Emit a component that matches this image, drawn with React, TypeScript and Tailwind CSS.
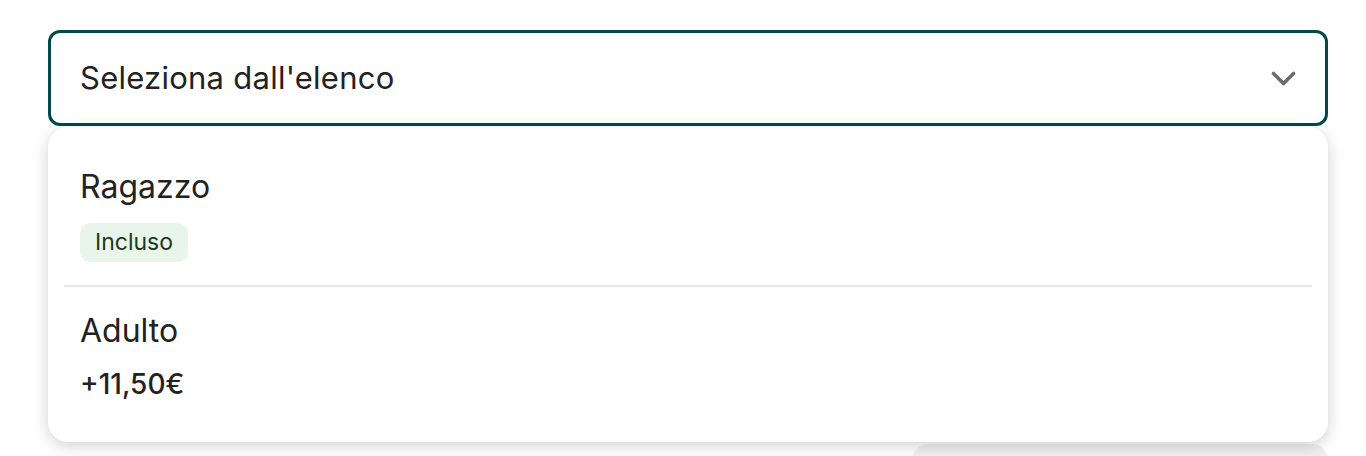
import React from "react";

export default function App() {
  return (
    <div className="relative w-[1366px] h-[456px] bg-white overflow-hidden" style={{ fontFamily: "Inter, 'Noto Sans', sans-serif" }}>
      <div className="absolute left-[912px] top-[444px] w-[416px] h-[40px] rounded-[16px] bg-[#f0f0f0]" />
      <div className="pt-[30px] pl-[48px] pr-[38px] relative">
        <div className="h-[96px] border-[3px] border-[#03484b] rounded-[12px] flex items-center justify-between pl-[29px] pr-[29px]">
          <span className="text-[31px] text-[#222] tracking-[0.25px]">Seleziona dall'elenco</span>
          <svg width="25" height="16" viewBox="0 0 25 16" fill="none" stroke="#6b6b6b" strokeWidth="3.6" strokeLinecap="round" strokeLinejoin="round" className="mt-[1px]">
            <path d="M2.5 2.5l10 10 10-10" />
          </svg>
        </div>
        <div className="mt-[1px] bg-white rounded-[20px] shadow-[0_4px_16px_rgba(0,0,0,0.18)] px-[16px] pt-[40px] pb-[40px]">
          <div className="px-[16px] pb-[23px]">
            <div className="text-[32px] text-[#222] leading-[40px]">Ragazzo</div>
            <div className="mt-[16px] inline-flex items-center h-[39px] px-[15px] rounded-[10px] bg-[#e9f5ea] text-[#1a3a1f] text-[23px]">Incluso</div>
          </div>
          <div className="h-[2px] bg-[#e8e8e8]" />
          <div className="px-[16px] pt-[24px]">
            <div className="text-[32px] text-[#222] leading-[40px]">Adulto</div>
            <div className="mt-[15px] text-[28px] font-medium text-[#222] leading-[36px]">+11,50€</div>
          </div>
        </div>
      </div>
    </div>
  );
}
